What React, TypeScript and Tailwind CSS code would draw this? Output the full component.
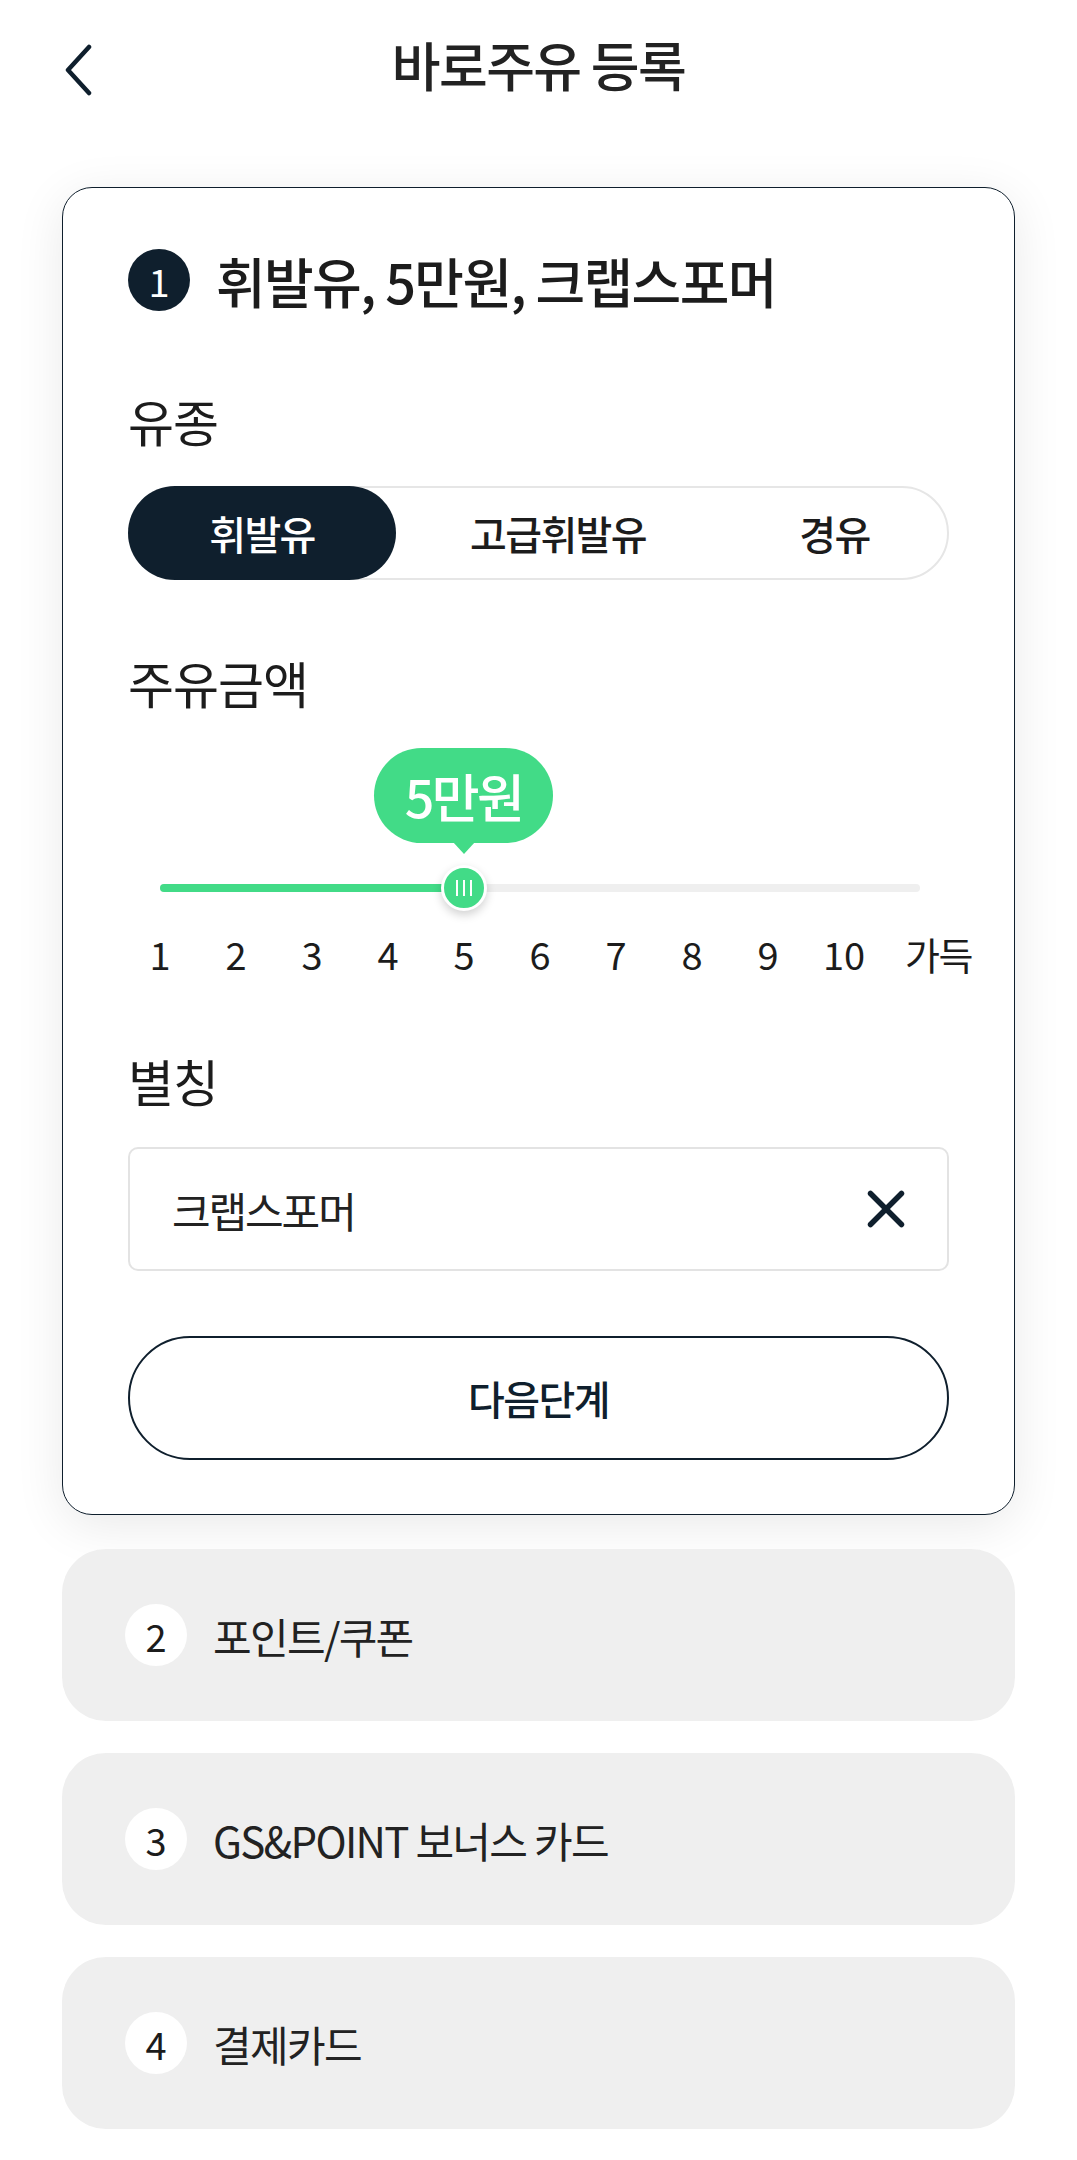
import { X } from "lucide-react";

const NAVY = "#0f1f2d";
const TICKS = ["1", "2", "3", "4", "5", "6", "7", "8", "9", "10"];
const STEPS = [
  { no: 2, label: "포인트/쿠폰" },
  { no: 3, label: "GS&POINT 보너스 카드" },
  { no: 4, label: "결제카드" },
];

function FuelSlider() {
  // value 5 of 1..가득(11) -> 40%
  const pct = 0.4;
  const trackW = 760;
  const thumbX = 32 + trackW * pct;

  return (
    <div className="relative h-[164px]">
      <div
        className="absolute top-0 flex h-[95px] w-[179px] items-center justify-center rounded-full bg-[#42db87] text-[52px] font-medium tracking-[-0.05em] text-white"
        style={{ left: thumbX - 90 }}
      >
        5만원
      </div>
      <div
        className="absolute top-[94px] h-0 w-0 border-x-[11px] border-t-[12px] border-x-transparent border-t-[#42db87]"
        style={{ left: thumbX - 11 }}
      />
      <div className="absolute left-[32px] top-[136px] h-[8px] w-[760px] rounded-full bg-[#efefef]">
        <div
          className="h-full rounded-full bg-[#42db87]"
          style={{ width: trackW * pct }}
        />
      </div>
      <div
        className="absolute top-[117px] flex h-[46px] w-[46px] items-center justify-center gap-[5px] rounded-full border-[3px] border-white bg-[#42db87] shadow-[0_4px_10px_rgba(0,0,0,0.18)]"
        style={{ left: thumbX - 23 }}
      >
        <span className="h-[16px] w-[2px] bg-white" />
        <span className="h-[16px] w-[2px] bg-white" />
        <span className="h-[16px] w-[2px] bg-white" />
      </div>
    </div>
  );
}

export default function App() {
  return (
    <div className="min-h-screen bg-white pb-[30px] font-['Noto_Sans_CJK_KR','Noto_Sans',sans-serif] text-[#1c1c1c]">
      <header className="relative flex h-[130px] items-center justify-center">
        <button className="absolute left-[58px] top-[40px] p-1">
          <svg width="32" height="52" viewBox="0 0 32 52" fill="none">
            <path
              d="M27 3 L6 26 L27 49"
              stroke={NAVY}
              strokeWidth="4.5"
              strokeLinecap="round"
              strokeLinejoin="round"
            />
          </svg>
        </button>
        <h1 className="text-[53px] font-medium tracking-[-0.03em] text-[#222]">
          바로주유 등록
        </h1>
      </header>

      <section className="mx-[62px] mt-[57px] rounded-[30px] border border-[#0f1f2d] bg-white px-[65px] pb-[54px] pt-[61px] shadow-[0_10px_50px_rgba(0,0,0,0.09)]">
        <div className="flex h-[62px] items-center gap-[26px]">
          <span className="flex h-[62px] w-[62px] shrink-0 items-center justify-center rounded-full bg-[#0f1f2d] text-[38px] text-white">
            1
          </span>
          <h2 className="whitespace-nowrap text-[54px] font-medium tracking-[-0.03em] text-[#1c1c1c]">
            휘발유, 5만원, 크랩스포머
          </h2>
        </div>

        <p className="mt-[79px] h-[60px] text-[50px] leading-[60px] tracking-[-0.02em]">
          유종
        </p>
        <div className="mt-[36px] flex h-[94px] rounded-full border-2 border-[#e6e6e6] text-[40px] font-medium tracking-[-0.04em]">
          <button className="-m-[2px] flex w-[268px] items-center justify-center rounded-full bg-[#0f1f2d] text-white">
            휘발유
          </button>
          <button className="flex w-[328px] items-center justify-center text-[#1c1c1c]">
            고급휘발유
          </button>
          <button className="flex flex-1 items-center justify-center text-[#1c1c1c]">
            경유
          </button>
        </div>

        <p className="mt-[72px] h-[60px] text-[50px] leading-[60px] tracking-[-0.02em]">
          주유금액
        </p>
        <div className="mt-[36px]">
          <FuelSlider />
        </div>
        <div className="-ml-[6px] mt-[18px] flex h-[48px] items-center whitespace-nowrap text-[38px] leading-none">
          {TICKS.map((t) => (
            <span key={t} className="w-[76px] shrink-0 text-center">
              {t}
            </span>
          ))}
          <span className="ml-[23px] shrink-0 tracking-[-0.04em]">가득</span>
        </div>

        <p className="mt-[72px] h-[60px] text-[50px] leading-[60px] tracking-[-0.02em]">
          별칭
        </p>
        <div className="mt-[37px] flex h-[124px] items-center justify-between rounded-[10px] border-2 border-[#e3e3e3] pl-[42px] pr-[30px]">
          <span className="text-[42px] tracking-[-0.05em] text-[#222]">
            크랩스포머
          </span>
          <X size={62} strokeWidth={2.1} color={NAVY} />
        </div>

        <button className="mt-[65px] flex h-[124px] w-full items-center justify-center rounded-full border-2 border-[#0f1f2d] text-[40px] font-medium tracking-[-0.04em] text-[#0f1f2d]">
          다음단계
        </button>
      </section>

      <div className="mx-[62px] mt-[34px] flex flex-col gap-[32px]">
        {STEPS.map((s) => (
          <div
            key={s.no}
            className="flex h-[172px] items-center gap-[26px] rounded-[44px] bg-[#efefef] pl-[63px]"
          >
            <span className="flex h-[62px] w-[62px] items-center justify-center rounded-full bg-white text-[38px] text-[#1c1c1c]">
              {s.no}
            </span>
            <span className="text-[42px] tracking-[-0.04em] text-[#222]">
              {s.label}
            </span>
          </div>
        ))}
      </div>
    </div>
  );
}
